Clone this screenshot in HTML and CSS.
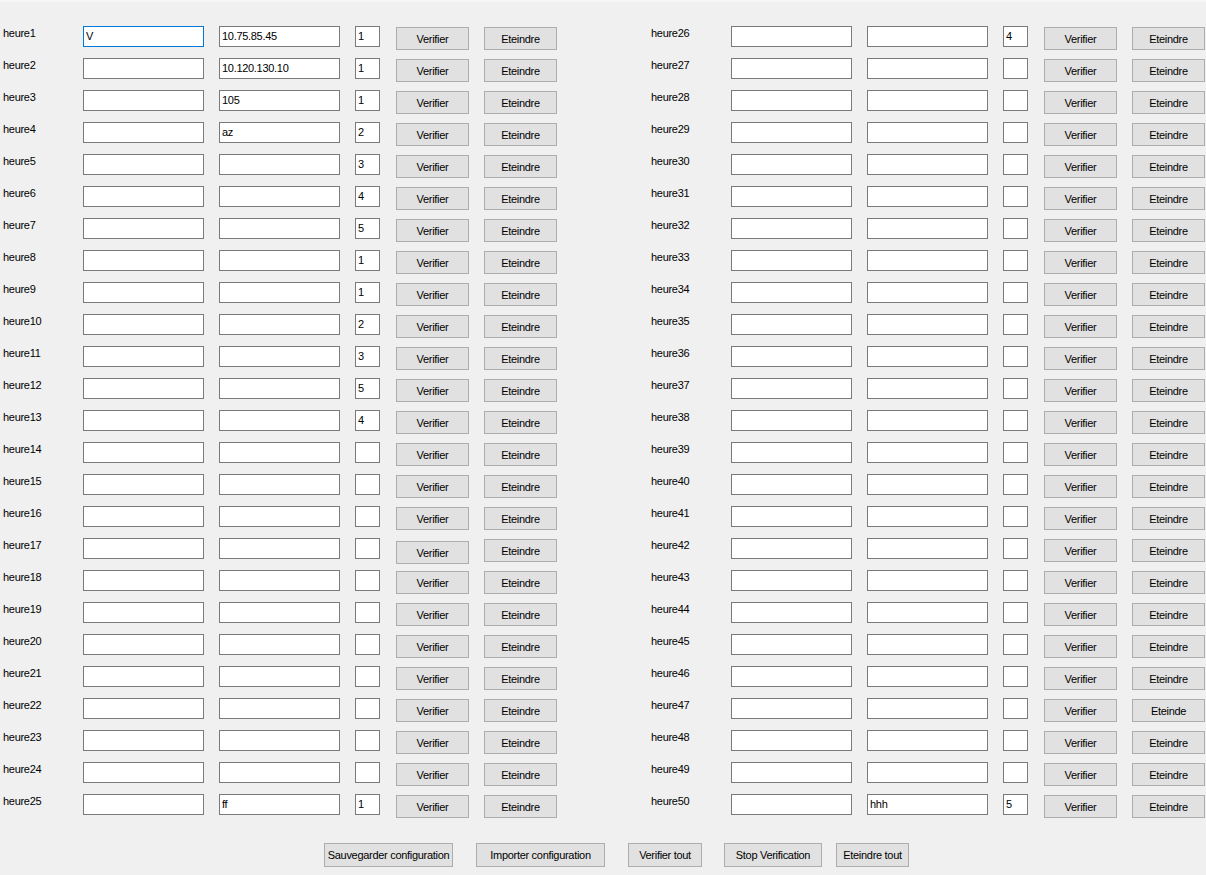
FILE: index.html
```html
<html>
  <head>
    <link rel="stylesheet" href="styles.css">
  </head>
  <body>
    <div class="topline"></div>
    <div id="root">
      <div class="col">
        <div class="row"><label>heure1</label><input class="name active" type="text" value="V"><input class="ip" type="text" value="10.75.85.45"><input class="num" type="text" value="1"><button class="verif">Verifier</button><button class="off">Eteindre</button></div>
        <div class="row"><label>heure2</label><input class="name" type="text"><input class="ip" type="text" value="10.120.130.10"><input class="num" type="text" value="1"><button class="verif">Verifier</button><button class="off">Eteindre</button></div>
        <div class="row"><label>heure3</label><input class="name" type="text"><input class="ip" type="text" value="105"><input class="num" type="text" value="1"><button class="verif">Verifier</button><button class="off">Eteindre</button></div>
        <div class="row"><label>heure4</label><input class="name" type="text"><input class="ip" type="text" value="az"><input class="num" type="text" value="2"><button class="verif">Verifier</button><button class="off">Eteindre</button></div>
        <div class="row"><label>heure5</label><input class="name" type="text"><input class="ip" type="text"><input class="num" type="text" value="3"><button class="verif">Verifier</button><button class="off">Eteindre</button></div>
        <div class="row"><label>heure6</label><input class="name" type="text"><input class="ip" type="text"><input class="num" type="text" value="4"><button class="verif">Verifier</button><button class="off">Eteindre</button></div>
        <div class="row"><label>heure7</label><input class="name" type="text"><input class="ip" type="text"><input class="num" type="text" value="5"><button class="verif">Verifier</button><button class="off">Eteindre</button></div>
        <div class="row"><label>heure8</label><input class="name" type="text"><input class="ip" type="text"><input class="num" type="text" value="1"><button class="verif">Verifier</button><button class="off">Eteindre</button></div>
        <div class="row"><label>heure9</label><input class="name" type="text"><input class="ip" type="text"><input class="num" type="text" value="1"><button class="verif">Verifier</button><button class="off">Eteindre</button></div>
        <div class="row"><label>heure10</label><input class="name" type="text"><input class="ip" type="text"><input class="num" type="text" value="2"><button class="verif">Verifier</button><button class="off">Eteindre</button></div>
        <div class="row"><label>heure11</label><input class="name" type="text"><input class="ip" type="text"><input class="num" type="text" value="3"><button class="verif">Verifier</button><button class="off">Eteindre</button></div>
        <div class="row"><label>heure12</label><input class="name" type="text"><input class="ip" type="text"><input class="num" type="text" value="5"><button class="verif">Verifier</button><button class="off">Eteindre</button></div>
        <div class="row"><label>heure13</label><input class="name" type="text"><input class="ip" type="text"><input class="num" type="text" value="4"><button class="verif">Verifier</button><button class="off">Eteindre</button></div>
        <div class="row"><label>heure14</label><input class="name" type="text"><input class="ip" type="text"><input class="num" type="text"><button class="verif">Verifier</button><button class="off">Eteindre</button></div>
        <div class="row"><label>heure15</label><input class="name" type="text"><input class="ip" type="text"><input class="num" type="text"><button class="verif">Verifier</button><button class="off">Eteindre</button></div>
        <div class="row"><label>heure16</label><input class="name" type="text"><input class="ip" type="text"><input class="num" type="text"><button class="verif">Verifier</button><button class="off">Eteindre</button></div>
        <div class="row"><label>heure17</label><input class="name" type="text"><input class="ip" type="text"><input class="num" type="text"><button class="verif low">Verifier</button><button class="off">Eteindre</button></div>
        <div class="row"><label>heure18</label><input class="name" type="text"><input class="ip" type="text"><input class="num" type="text"><button class="verif">Verifier</button><button class="off">Eteindre</button></div>
        <div class="row"><label>heure19</label><input class="name" type="text"><input class="ip" type="text"><input class="num" type="text"><button class="verif">Verifier</button><button class="off">Eteindre</button></div>
        <div class="row"><label>heure20</label><input class="name" type="text"><input class="ip" type="text"><input class="num" type="text"><button class="verif">Verifier</button><button class="off">Eteindre</button></div>
        <div class="row"><label>heure21</label><input class="name" type="text"><input class="ip" type="text"><input class="num" type="text"><button class="verif">Verifier</button><button class="off">Eteindre</button></div>
        <div class="row"><label>heure22</label><input class="name" type="text"><input class="ip" type="text"><input class="num" type="text"><button class="verif">Verifier</button><button class="off">Eteindre</button></div>
        <div class="row"><label>heure23</label><input class="name" type="text"><input class="ip" type="text"><input class="num" type="text"><button class="verif">Verifier</button><button class="off">Eteindre</button></div>
        <div class="row"><label>heure24</label><input class="name" type="text"><input class="ip" type="text"><input class="num" type="text"><button class="verif">Verifier</button><button class="off">Eteindre</button></div>
        <div class="row"><label>heure25</label><input class="name" type="text"><input class="ip" type="text" value="ff"><input class="num" type="text" value="1"><button class="verif">Verifier</button><button class="off">Eteindre</button></div>
      </div>
      <div class="col">
        <div class="row"><label>heure26</label><input class="name" type="text"><input class="ip" type="text"><input class="num" type="text" value="4"><button class="verif">Verifier</button><button class="off">Eteindre</button></div>
        <div class="row"><label>heure27</label><input class="name" type="text"><input class="ip" type="text"><input class="num" type="text"><button class="verif">Verifier</button><button class="off">Eteindre</button></div>
        <div class="row"><label>heure28</label><input class="name" type="text"><input class="ip" type="text"><input class="num" type="text"><button class="verif">Verifier</button><button class="off">Eteindre</button></div>
        <div class="row"><label>heure29</label><input class="name" type="text"><input class="ip" type="text"><input class="num" type="text"><button class="verif">Verifier</button><button class="off">Eteindre</button></div>
        <div class="row"><label>heure30</label><input class="name" type="text"><input class="ip" type="text"><input class="num" type="text"><button class="verif">Verifier</button><button class="off">Eteindre</button></div>
        <div class="row"><label>heure31</label><input class="name" type="text"><input class="ip" type="text"><input class="num" type="text"><button class="verif">Verifier</button><button class="off">Eteindre</button></div>
        <div class="row"><label>heure32</label><input class="name" type="text"><input class="ip" type="text"><input class="num" type="text"><button class="verif">Verifier</button><button class="off">Eteindre</button></div>
        <div class="row"><label>heure33</label><input class="name" type="text"><input class="ip" type="text"><input class="num" type="text"><button class="verif">Verifier</button><button class="off">Eteindre</button></div>
        <div class="row"><label>heure34</label><input class="name" type="text"><input class="ip" type="text"><input class="num" type="text"><button class="verif">Verifier</button><button class="off">Eteindre</button></div>
        <div class="row"><label>heure35</label><input class="name" type="text"><input class="ip" type="text"><input class="num" type="text"><button class="verif">Verifier</button><button class="off">Eteindre</button></div>
        <div class="row"><label>heure36</label><input class="name" type="text"><input class="ip" type="text"><input class="num" type="text"><button class="verif">Verifier</button><button class="off">Eteindre</button></div>
        <div class="row"><label>heure37</label><input class="name" type="text"><input class="ip" type="text"><input class="num" type="text"><button class="verif">Verifier</button><button class="off">Eteindre</button></div>
        <div class="row"><label>heure38</label><input class="name" type="text"><input class="ip" type="text"><input class="num" type="text"><button class="verif">Verifier</button><button class="off">Eteindre</button></div>
        <div class="row"><label>heure39</label><input class="name" type="text"><input class="ip" type="text"><input class="num" type="text"><button class="verif">Verifier</button><button class="off">Eteindre</button></div>
        <div class="row"><label>heure40</label><input class="name" type="text"><input class="ip" type="text"><input class="num" type="text"><button class="verif">Verifier</button><button class="off">Eteindre</button></div>
        <div class="row"><label>heure41</label><input class="name" type="text"><input class="ip" type="text"><input class="num" type="text"><button class="verif">Verifier</button><button class="off">Eteindre</button></div>
        <div class="row"><label>heure42</label><input class="name" type="text"><input class="ip" type="text"><input class="num" type="text"><button class="verif">Verifier</button><button class="off">Eteindre</button></div>
        <div class="row"><label>heure43</label><input class="name" type="text"><input class="ip" type="text"><input class="num" type="text"><button class="verif">Verifier</button><button class="off">Eteindre</button></div>
        <div class="row"><label>heure44</label><input class="name" type="text"><input class="ip" type="text"><input class="num" type="text"><button class="verif">Verifier</button><button class="off">Eteindre</button></div>
        <div class="row"><label>heure45</label><input class="name" type="text"><input class="ip" type="text"><input class="num" type="text"><button class="verif">Verifier</button><button class="off">Eteindre</button></div>
        <div class="row"><label>heure46</label><input class="name" type="text"><input class="ip" type="text"><input class="num" type="text"><button class="verif">Verifier</button><button class="off">Eteindre</button></div>
        <div class="row"><label>heure47</label><input class="name" type="text"><input class="ip" type="text"><input class="num" type="text"><button class="verif">Verifier</button><button class="off">Eteinde</button></div>
        <div class="row"><label>heure48</label><input class="name" type="text"><input class="ip" type="text"><input class="num" type="text"><button class="verif">Verifier</button><button class="off">Eteindre</button></div>
        <div class="row"><label>heure49</label><input class="name" type="text"><input class="ip" type="text"><input class="num" type="text"><button class="verif">Verifier</button><button class="off">Eteindre</button></div>
        <div class="row"><label>heure50</label><input class="name" type="text"><input class="ip" type="text" value="hhh"><input class="num" type="text" value="5"><button class="verif">Verifier</button><button class="off">Eteindre</button></div>
      </div>
    </div>
    <div class="footer">
      <button class="save">Sauvegarder configuration</button>
      <button class="load">Importer configuration</button>
      <button class="all">Verifier tout</button>
      <button class="stop">Stop Verification</button>
      <button class="alloff">Eteindre tout</button>
    </div>
  </body>
</html>
```

FILE: styles.css
```css
html, body {
  margin: 0;
  background: #f0f0f0;
  font-family: "Liberation Sans", Arial, sans-serif;
  font-size: 11px;
  letter-spacing: -0.3px;
  color: #000;
}
.topline {
  height: 2px;
  background: #f6f6f6;
}

/* two columns of 25 rows ------------------------------- */
#root {
  display: flex;
  padding-top: 24px;
}
.col {
  flex: none;
  width: 648px;
}
.col + .col {
  width: 558px;
}
.row {
  display: flex;
  align-items: flex-start;
  height: 32px;
}

label {
  flex: none;
  width: 80px;
  padding-left: 3px;
  margin-top: 1px;
  line-height: 13px;
}

/* TEXT BOXES ================================== */
input {
  flex: none;
  box-sizing: border-box;
  height: 21px;
  margin: 0 15px 0 0;
  padding: 0 2px 2px 2px;
  border: 1px solid #7a7a7a;
  border-radius: 0;
  background: #fff;
  font-family: inherit;
  font-size: 11px;
  letter-spacing: -0.3px;
  color: #000;
  outline: none;
}
input.name, input.ip { width: 121px; }
input.num { width: 25px; margin-right: 16px; }
input.active { border-color: #0078d7; }

/* BUTTONS ===================================== */
button {
  flex: none;
  box-sizing: border-box;
  height: 23px;
  margin: 1px 0 0 0;
  padding: 0;
  border: 1px solid #adadad;
  border-radius: 0;
  background: #e1e1e1;
  font-family: inherit;
  font-size: 11px;
  letter-spacing: -0.3px;
  color: #000;
  white-space: nowrap;
}
.verif, .off { width: 73px; }
.verif { margin-right: 15px; }
.verif.low { margin-top: 3px; }

/* BOTTOM BAR ================================== */
.footer {
  display: flex;
  padding: 17px 0 0 324px;
}
.footer button {
  height: 24px;
  margin: 0;
}
.footer .save, .footer .load { width: 129px; margin-right: 23px; }
.footer .all { width: 74px; margin-right: 22px; }
.footer .stop { width: 98px; margin-right: 14px; }
.footer .alloff { width: 73px; }
```
